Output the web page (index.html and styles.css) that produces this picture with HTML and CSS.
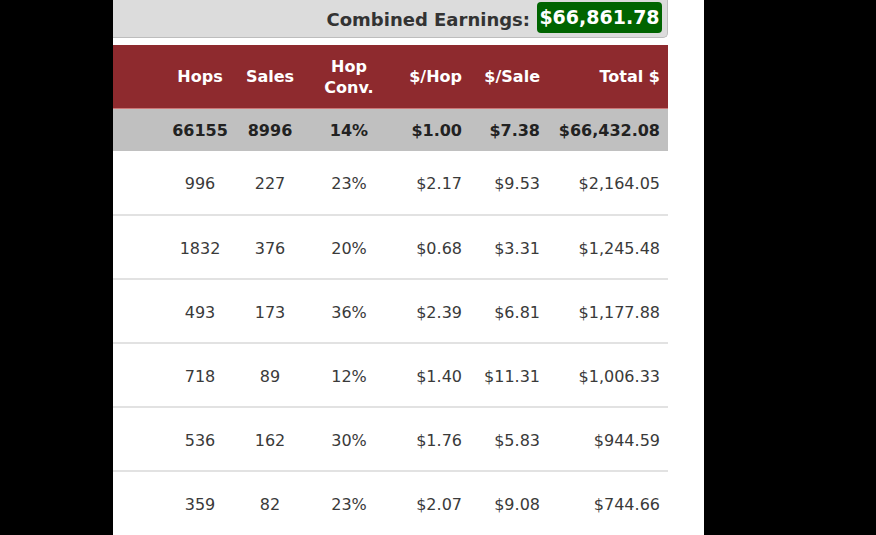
FILE: index.html
```html
<!DOCTYPE html>
<html>
<head>
<meta charset="utf-8">
<link rel="stylesheet" href="styles.css">
</head>
<body>
<div class="panel">
  <div class="topbar">
    <span class="label">Combined Earnings:</span>
    <span class="badge">$66,861.78</span>
  </div>
  <table class="stats">
    <colgroup>
      <col class="c-name"><col class="c-hops"><col class="c-sales"><col class="c-conv"><col class="c-hop"><col class="c-sale"><col class="c-total">
    </colgroup>
    <thead>
      <tr class="head">
        <th></th><th class="ctr">Hops</th><th class="ctr">Sales</th><th class="ctr">Hop<br>Conv.</th><th class="rt">$/Hop</th><th class="rt">$/Sale</th><th class="rt">Total $</th>
      </tr>
    </thead>
    <tbody>
      <tr class="sum">
        <td></td><td class="ctr">66155</td><td class="ctr">8996</td><td class="ctr">14%</td><td class="rt">$1.00</td><td class="rt">$7.38</td><td class="rt">$66,432.08</td>
      </tr>
      <tr class="row"><td></td><td class="ctr">996</td><td class="ctr">227</td><td class="ctr">23%</td><td class="rt">$2.17</td><td class="rt">$9.53</td><td class="rt">$2,164.05</td></tr>
      <tr class="row"><td></td><td class="ctr">1832</td><td class="ctr">376</td><td class="ctr">20%</td><td class="rt">$0.68</td><td class="rt">$3.31</td><td class="rt">$1,245.48</td></tr>
      <tr class="row"><td></td><td class="ctr">493</td><td class="ctr">173</td><td class="ctr">36%</td><td class="rt">$2.39</td><td class="rt">$6.81</td><td class="rt">$1,177.88</td></tr>
      <tr class="row"><td></td><td class="ctr">718</td><td class="ctr">89</td><td class="ctr">12%</td><td class="rt">$1.40</td><td class="rt">$11.31</td><td class="rt">$1,006.33</td></tr>
      <tr class="row"><td></td><td class="ctr">536</td><td class="ctr">162</td><td class="ctr">30%</td><td class="rt">$1.76</td><td class="rt">$5.83</td><td class="rt">$944.59</td></tr>
      <tr class="row last"><td></td><td class="ctr">359</td><td class="ctr">82</td><td class="ctr">23%</td><td class="rt">$2.07</td><td class="rt">$9.08</td><td class="rt">$744.66</td></tr>
    </tbody>
  </table>
</div>
</body>
</html>
```

FILE: styles.css
```css
html, body {
  margin: 0;
  padding: 0;
  background: #000;
  height: 100%;
  overflow: hidden;
}
body {
  font-family: "DejaVu Sans", Verdana, sans-serif;
}
.panel {
  margin-left: 113px;
  width: 591px;
  height: 535px;
  background: #fff;
}
.topbar {
  width: 549px;
  height: 37px;
  background: #dcdcdc;
  border-right: 1px solid #bdbdbd;
  border-bottom: 1px solid #bdbdbd;
  border-bottom-right-radius: 5px;
  display: flex;
  align-items: center;
  justify-content: flex-end;
  gap: 7px;
  padding-right: 5px;
  box-sizing: content-box;
}
.label {
  font-weight: bold;
  font-size: 18px;
  color: #333;
  margin-top: 1px;
}
.badge {
  background: #006400;
  color: #fff;
  font-weight: bold;
  font-size: 19px;
  height: 31px;
  width: 125px;
  display: flex;
  align-items: center;
  justify-content: center;
  border-radius: 4px;
  margin-top: -3px;
}
.stats {
  margin-top: 7px;
  width: 555px;
  table-layout: fixed;
  border-collapse: collapse;
  font-size: 16px;
}
.c-name { width: 52px; }
.c-hops { width: 70px; }
.c-sales { width: 70px; }
.c-conv { width: 88px; }
.c-hop { width: 77px; }
.c-sale { width: 78px; }
.c-total { width: 120px; }
.stats th, .stats td {
  padding: 0 8px;
  white-space: nowrap;
}
.ctr { text-align: center; }
.rt { text-align: right; }
.head {
  background: #8e2a2e;
  color: #fff;
  height: 63px;
  border-bottom: 1px solid #c77;
}
.head th {
  font-weight: bold;
  line-height: 21px;
  padding-top: 1px;
}
.head th:nth-child(2), .head th:nth-child(3) { padding-left: 0; padding-right: 0; }
.sum {
  background: #c0c0c0;
  height: 43px;
  font-weight: bold;
  color: #222;
}
.sum td {
  padding-top: 2px;
}
.sum td:nth-child(2), .sum td:nth-child(3) { padding-left: 0; padding-right: 0; }
.row {
  height: 64px;
  color: #3a3a3a;
  border-bottom: 2px solid #e2e2e2;
}
.row td {
  padding-top: 2px;
}
.row.last { border-bottom: none; }
```
